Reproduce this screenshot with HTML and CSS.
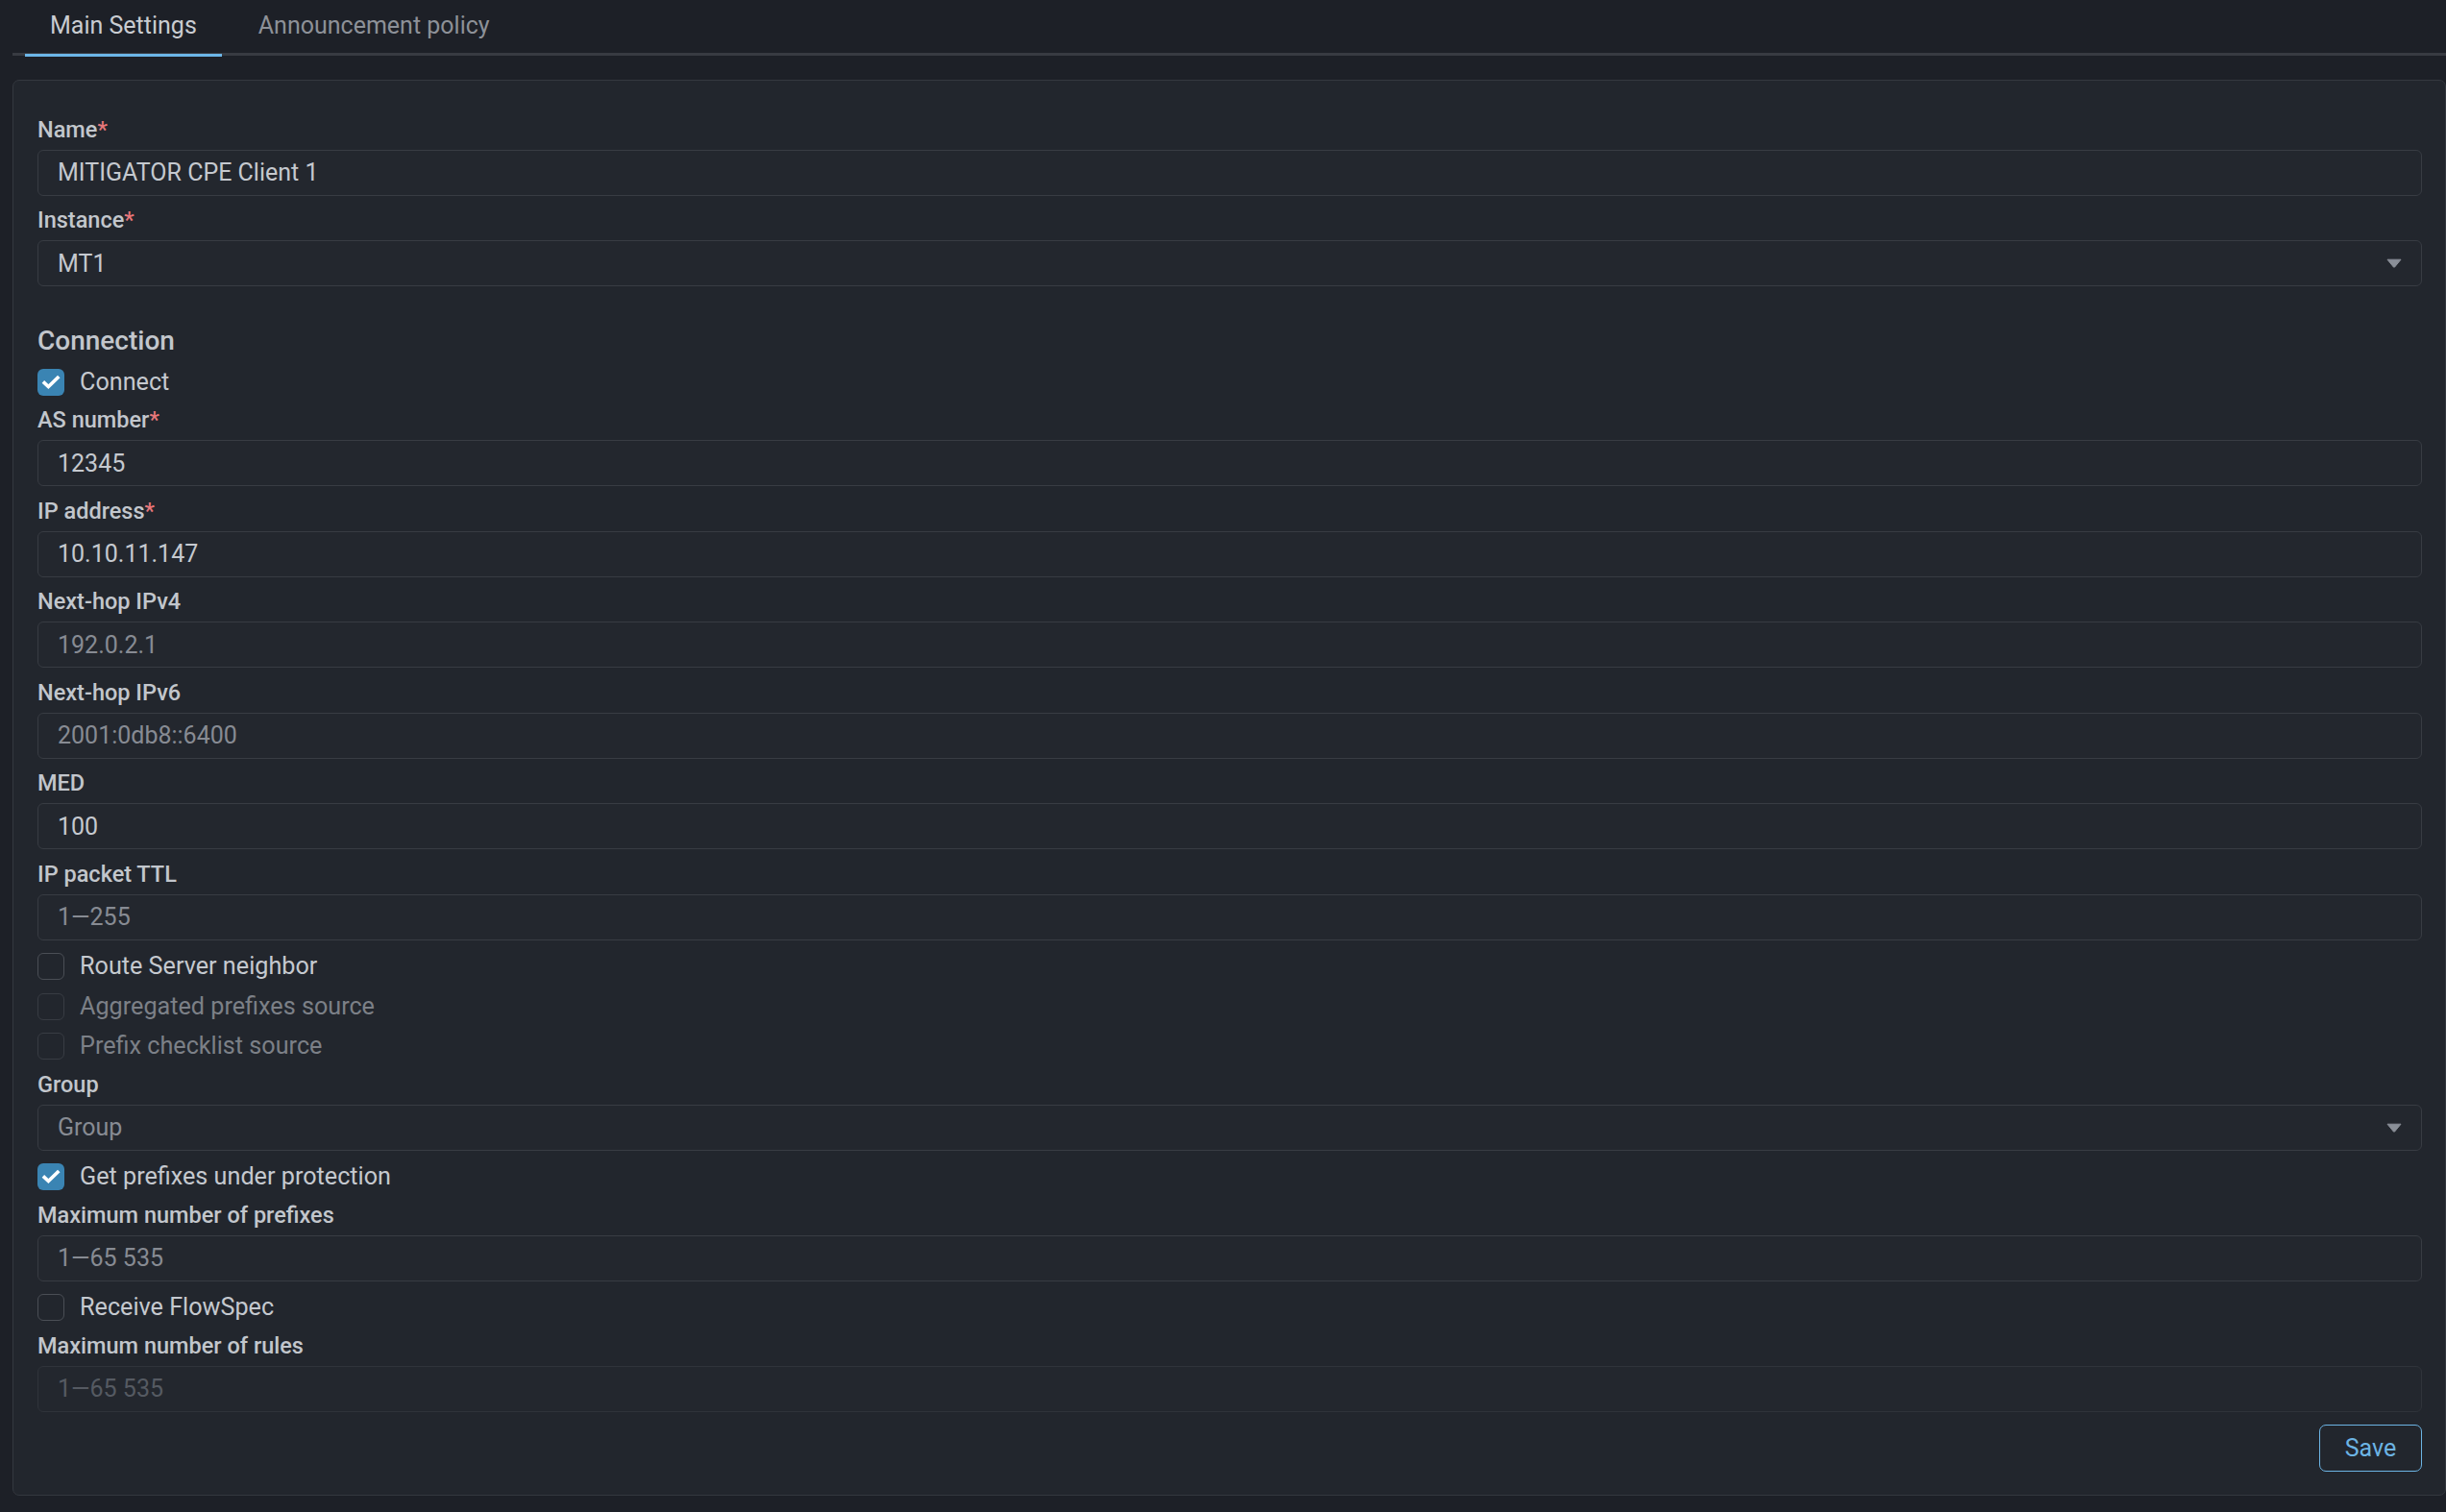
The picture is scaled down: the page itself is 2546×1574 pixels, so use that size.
FILE: index.html
```html
<!DOCTYPE html>
<html lang="en">
<head>
<meta charset="utf-8">
<title>Neighbor settings</title>
<link rel="stylesheet" href="styles.css">
</head>
<body>
<div class="tabs">
  <div class="tab active">Main Settings</div>
  <div class="tab">Announcement policy</div>
</div>
<form class="panel">
  <div class="field">
    <div class="label">Name<span class="req">*</span></div>
    <div class="input"><span class="value">MITIGATOR CPE Client 1</span></div>
  </div>
  <div class="field">
    <div class="label">Instance<span class="req">*</span></div>
    <div class="input select"><span class="value">MT1</span><svg class="caret" width="16" height="10" viewBox="0 0 16 10"><path d="M1 1.2 H15 L8.6 9 Q8 9.6 7.4 9 Z" fill="#8a8f98" stroke="#8a8f98" stroke-width="1" stroke-linejoin="round"/></svg></div>
  </div>
  <div class="heading">Connection</div>
  <div class="check-row">
    <span class="box checked"><svg width="28" height="28" viewBox="0 0 28 28"><path d="M7.2 14.6 L11.4 18.6 L21 9.2" fill="none" stroke="#fff" stroke-width="3.6" stroke-linecap="square"/></svg></span>
    <span class="check-label">Connect</span>
  </div>
  <div class="field">
    <div class="label">AS number<span class="req">*</span></div>
    <div class="input"><span class="value">12345</span></div>
  </div>
  <div class="field">
    <div class="label">IP address<span class="req">*</span></div>
    <div class="input"><span class="value">10.10.11.147</span></div>
  </div>
  <div class="field">
    <div class="label">Next-hop IPv4</div>
    <div class="input"><span class="placeholder">192.0.2.1</span></div>
  </div>
  <div class="field">
    <div class="label">Next-hop IPv6</div>
    <div class="input"><span class="placeholder">2001:0db8::6400</span></div>
  </div>
  <div class="field">
    <div class="label">MED</div>
    <div class="input"><span class="value">100</span></div>
  </div>
  <div class="field">
    <div class="label">IP packet TTL</div>
    <div class="input"><span class="placeholder">1—255</span></div>
  </div>
  <div class="check-row">
    <span class="box"></span>
    <span class="check-label">Route Server neighbor</span>
  </div>
  <div class="check-row disabled">
    <span class="box"></span>
    <span class="check-label">Aggregated prefixes source</span>
  </div>
  <div class="check-row disabled">
    <span class="box"></span>
    <span class="check-label">Prefix checklist source</span>
  </div>
  <div class="field">
    <div class="label">Group</div>
    <div class="input select"><span class="placeholder">Group</span><svg class="caret" width="16" height="10" viewBox="0 0 16 10"><path d="M1 1.2 H15 L8.6 9 Q8 9.6 7.4 9 Z" fill="#8a8f98" stroke="#8a8f98" stroke-width="1" stroke-linejoin="round"/></svg></div>
  </div>
  <div class="check-row">
    <span class="box checked"><svg width="28" height="28" viewBox="0 0 28 28"><path d="M7.2 14.6 L11.4 18.6 L21 9.2" fill="none" stroke="#fff" stroke-width="3.6" stroke-linecap="square"/></svg></span>
    <span class="check-label">Get prefixes under protection</span>
  </div>
  <div class="field">
    <div class="label">Maximum number of prefixes</div>
    <div class="input"><span class="placeholder">1—65 535</span></div>
  </div>
  <div class="check-row">
    <span class="box"></span>
    <span class="check-label">Receive FlowSpec</span>
  </div>
  <div class="field">
    <div class="label">Maximum number of rules</div>
    <div class="input disabled"><span class="placeholder">1—65 535</span></div>
  </div>
  <div class="actions">
    <button type="button" class="save">Save</button>
  </div>
</form>
</body>
</html>
```
FILE: styles.css
```css
html, body {
  margin: 0;
  padding: 0;
  background: #1d2027;
  font-family: Roboto, "Noto Sans", "Liberation Sans", sans-serif;
  color: #c5c9cf;
}

body {
  min-height: 1574px;
  overflow: hidden;
}

.tabs {
  display: flex;
  gap: 12px;
  margin-left: 13px;
  padding-left: 13px;
  height: 55px;
  border-bottom: 3px solid #383b42;
}

.tab {
  position: relative;
  padding: 12px 26px 0;
  font-size: 25px;
  line-height: 30px;
  color: #8d9198;
}

.tab.active {
  color: #c9ccd1;
}

.tab.active::after {
  content: "";
  position: absolute;
  left: 0;
  right: 0;
  bottom: -4px;
  height: 3px;
  background: #6cb6e8;
}

.panel {
  display: block;
  margin: 25px 0 0 13px;
  padding: 38.5px 24px 24px 25px;
  background: #22262d;
  border: 1px solid #34383f;
  border-radius: 7px;
}

.field {
  margin-bottom: 13.5px;
}

.label {
  font-size: 23.5px;
  line-height: 24px;
  font-weight: 500;
  color: #c2c6cc;
  margin-bottom: 9px;
}

.req {
  color: #e8777a;
}

.input {
  display: flex;
  align-items: center;
  height: 48px;
  box-sizing: border-box;
  border: 1px solid #383c43;
  border-radius: 6px;
  padding: 0 20px;
  font-size: 25px;
  background: #23272e;
}

.input.disabled {
  border-color: #2f333a;
}

.value {
  color: #c5c9cf;
}

.placeholder {
  color: #878b93;
}

.input.disabled .placeholder {
  color: #555a62;
}

.select {
  justify-content: space-between;
}

.caret {
  display: block;
}

.heading {
  margin-top: 38.5px;
  margin-bottom: 11px;
  font-size: 28px;
  line-height: 36px;
  font-weight: 500;
  color: #c2c6cc;
}

.check-row {
  display: flex;
  align-items: center;
  gap: 16px;
  height: 28px;
  margin-bottom: 13.5px;
}

.box {
  width: 28px;
  height: 28px;
  box-sizing: border-box;
  border: 1.5px solid #4a4e55;
  border-radius: 6px;
  flex: none;
  position: relative;
}

.box svg {
  position: absolute;
  left: 0;
  top: 0;
}

.box.checked {
  background: #3a84b3;
  border: none;
}

.check-label {
  font-size: 25.2px;
  line-height: 30px;
  color: #c5c9cf;
}

.check-row.disabled .box {
  border-color: #383c43;
}

.check-row.disabled .check-label {
  color: #7c8087;
}

.actions {
  display: flex;
  justify-content: flex-end;
}

.save {
  height: 49px;
  width: 107px;
  box-sizing: border-box;
  background: transparent;
  border: 1.5px solid #6cb4e4;
  border-radius: 7px;
  color: #6cb4e4;
  font-family: Roboto, "Noto Sans", "Liberation Sans", sans-serif;
  font-size: 25px;
  padding: 0;
}
```
